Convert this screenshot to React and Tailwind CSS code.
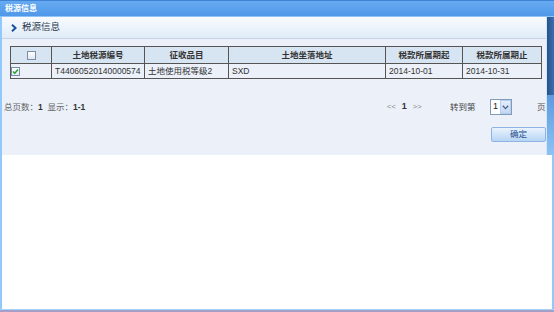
import React from "react";

const cjk = { fontFamily: '"Liberation Sans", "Noto Sans CJK SC", sans-serif' };

function Box({ checked }) {
  return (
    <span className="inline-flex h-[9px] w-[9px] items-center justify-center border border-[#7b8ea8] bg-gradient-to-b from-[#ffffff] to-[#e2e8f0] align-middle">
      {checked && (
        <svg width="7" height="7" viewBox="0 0 7 7">
          <path d="M1 3.5 L2.8 5.3 L6 1.5" fill="none" stroke="#21a121" strokeWidth="1.4" />
        </svg>
      )}
    </span>
  );
}

export default function App() {
  const th = "border border-[#555] bg-[#d7e4f2] text-center font-bold text-[#333] h-[17px] p-0";
  const td = "border border-[#555] text-left text-[#333] h-[15px] p-0 pl-[3px] whitespace-nowrap overflow-hidden";
  return (
    <div className="flex h-[312px] w-[554px] flex-col overflow-hidden bg-white" style={cjk}>
      <div className="flex h-[17px] items-center border-t border-[#3f83d6] border-b border-b-[#8fc4f6] bg-gradient-to-b from-[#66aaf1] to-[#4f98e9] pl-[5px] text-[8px] font-bold text-white">
        税源信息
      </div>
      <div className="flex flex-1 flex-col">
        <div className="flex">
          <div className="w-[2px] bg-[#92c9fb]" />
          <div className="flex w-[544px] flex-col bg-[#ebf0f9]">
            <div className="flex h-[22px] items-center gap-[5px] border-b border-[#c6d3e6] bg-gradient-to-b from-[#f8fbfe] to-[#e1ecf8] pl-[9px] text-[9.5px] text-[#2b3a4d]">
              <svg width="6" height="8" viewBox="0 0 6 8">
                <path d="M1 0.8 L4.6 4 L1 7.2" fill="none" stroke="#174f9c" strokeWidth="2" />
              </svg>
              <span>税源信息</span>
            </div>
            <div className="pl-[8px] pt-[7px]">
              <table className="w-[531px] table-fixed border-collapse text-[8.5px] leading-none">
                <colgroup>
                  <col style={{ width: 41 }} />
                  <col style={{ width: 93 }} />
                  <col style={{ width: 84 }} />
                  <col style={{ width: 157 }} />
                  <col style={{ width: 77 }} />
                  <col style={{ width: 79 }} />
                </colgroup>
                <thead>
                  <tr>
                    <th className={th}><Box /></th>
                    <th className={th}>土地税源编号</th>
                    <th className={th}>征收品目</th>
                    <th className={th}>土地坐落地址</th>
                    <th className={th}>税款所属期起</th>
                    <th className={th}>税款所属期止</th>
                  </tr>
                </thead>
                <tbody>
                  <tr>
                    <td className={td + " !pl-0 text-center"}><Box checked /></td>
                    <td className={td}>T44060520140000574</td>
                    <td className={td}>土地使用税等级2</td>
                    <td className={td}>SXD</td>
                    <td className={td}>2014-10-01</td>
                    <td className={td}>2014-10-31</td>
                  </tr>
                </tbody>
              </table>
            </div>
            <div className="mt-[19px] flex h-[18px] items-center text-[8.5px] text-[#666]">
              <div className="w-[385px] pl-[2px]">
                总页数：<b className="text-[#333]">1</b>&nbsp;&nbsp;显示：<b className="text-[#333]">1-1</b>
              </div>
              <div className="flex w-[63px] items-center text-[7.5px] text-[#888]">
                <span>&lt;&lt;</span>
                <b className="ml-[6px] text-[9px] text-[#333]">1</b>
                <span className="ml-[6px]">&gt;&gt;</span>
              </div>
              <div className="w-[40px] text-[#444]">转到第</div>
              <div className="flex h-[16px] w-[22px] items-center border border-[#7f9db9] bg-white">
                <span className="pl-[2px] text-[9px] text-[#222]">1</span>
                <span className="ml-auto flex h-[14px] w-[11px] items-center justify-center border border-[#b7cdf0] bg-gradient-to-b from-[#e4eefc] to-[#c3d6f4]">
                  <svg width="7" height="5" viewBox="0 0 7 5">
                    <path d="M0.8 0.8 L3.5 3.6 L6.2 0.8" fill="none" stroke="#4d6185" strokeWidth="1.3" />
                  </svg>
                </span>
              </div>
              <div className="ml-[25px] text-[#555]">页</div>
            </div>
            <div className="mt-[11px] flex justify-end pb-[13px]">
              <button className="flex h-[15px] w-[55px] items-center justify-center rounded-[2px] border border-[#8fb4e4] bg-gradient-to-b from-[#eaf3fd] to-[#b7d5f4] text-[8.5px] text-[#1d4c8c]">
                确定
              </button>
            </div>
          </div>
          <div className="flex w-[8px] flex-col border-l border-[#d6e4f4]">
            <div className="h-[78px] bg-gradient-to-r from-[#23538f] to-[#3d6fae]" />
            <div className="flex-1 bg-gradient-to-b from-[#5c9ae0] to-[#8cc3f4]" />
          </div>
        </div>
        <div className="flex flex-1">
          <div className="w-[2px] bg-[#92c9fb]" />
          <div className="flex-1 bg-white" />
          <div className="w-[2px] bg-[#92c9fb]" />
        </div>
        <div className="h-[1px] bg-[#a9d3fb]" />
        <div className="h-[2px] bg-[#a49fc9]" />
      </div>
    </div>
  );
}
